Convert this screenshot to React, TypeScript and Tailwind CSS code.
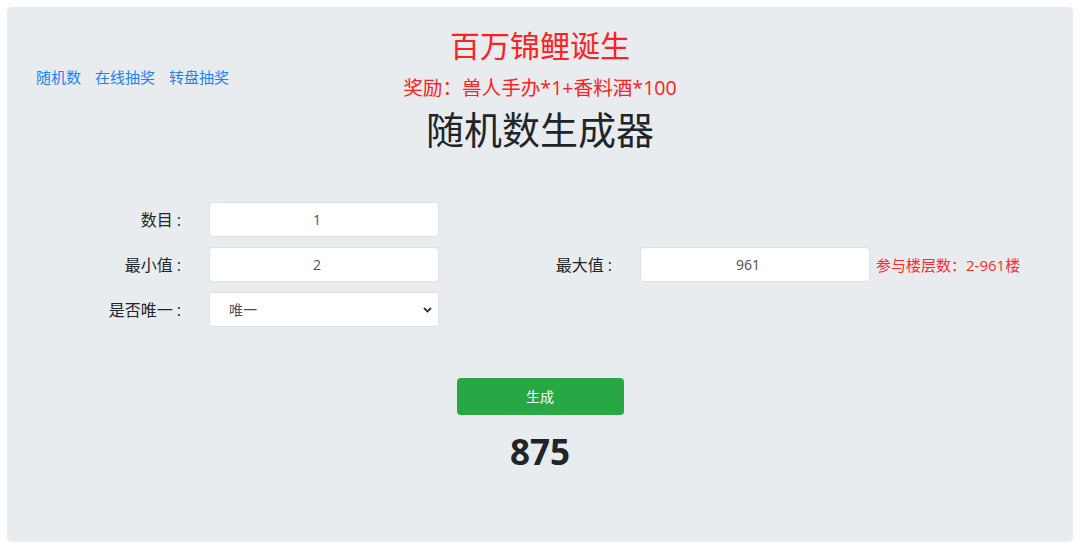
import React from "react";

const font = "font-['Open_Sans','Noto_Sans_CJK_SC',sans-serif]";

function Label({ text, w }: { text: string; w: string }) {
  return (
    <div className={`${w} shrink-0 text-right text-[16px] leading-[20px] text-[#212529]`}>
      {text}
      <span className="ml-[4px]">:</span>
    </div>
  );
}

function Field({ value }: { value: string }) {
  return (
    <input
      readOnly
      value={value}
      className="ml-[28px] h-[35px] w-[230px] shrink-0 rounded-[4px] border border-[#dde1e5] bg-white pr-[14px] text-center text-[14px] text-[#495057] outline-none"
    />
  );
}

export default function App() {
  return (
    <div className={`min-h-[550px] bg-white pt-[7px] ${font}`}>
      <div className="mx-[7px] flex h-[535px] flex-col rounded-[5px] bg-[#e9ecef]">
        <div className="grid grid-cols-[1fr_auto_1fr] pt-[21px]">
          <div className="flex gap-[14px] pl-[29px] pt-[39px] text-[15px] leading-[20px] text-[#1a82f7]">
            <a>随机数</a>
            <a>在线抽奖</a>
            <a>转盘抽奖</a>
          </div>
          <div className="flex flex-col items-center">
            <div className="text-[30px] leading-[36px] text-[#ff2020]">百万锦鲤诞生</div>
            <div className="mt-[10px] text-[19.6px] leading-[28px] text-[#ff2020]">
              奖励：兽人手办*1+香料酒*100
            </div>
            <div className="mt-[4px] text-[38px] leading-[46px] text-[#212529]">随机数生成器</div>
          </div>
          <div />
        </div>

        <div className="mt-[50px] flex flex-col gap-[10px]">
          <div className="flex items-center">
            <Label text="数目" w="w-[174px]" />
            <Field value="1" />
          </div>
          <div className="flex items-center">
            <Label text="最小值" w="w-[174px]" />
            <Field value="2" />
            <Label text="最大值" w="w-[173px]" />
            <Field value="961" />
            <div className="ml-[6px] text-[15px] leading-[20px] text-[#ff2a2a]">参与楼层数：2-961楼</div>
          </div>
          <div className="flex items-center">
            <Label text="是否唯一" w="w-[174px]" />
            <div className="relative ml-[28px] flex h-[35px] w-[230px] shrink-0 items-center rounded-[4px] border border-[#dde1e5] bg-white pl-[19px] text-[14px] text-[#495057]">
              唯一
              <svg
                className="absolute right-[6px] top-[14px]"
                width="9"
                height="6"
                viewBox="0 0 9 6"
                fill="none"
              >
                <path d="M1 1l3.5 3.5L8 1" stroke="#333" strokeWidth="1.8" />
              </svg>
            </div>
          </div>
        </div>

        <div className="mt-[51px] flex flex-col items-center">
          <button className="h-[37px] w-[167px] rounded-[4px] bg-[#28a745] text-[14px] text-white">
            生成
          </button>
          <div className="mt-[17px] text-[35px] font-bold leading-[40px] text-[#212529]">875</div>
        </div>
      </div>
    </div>
  );
}
